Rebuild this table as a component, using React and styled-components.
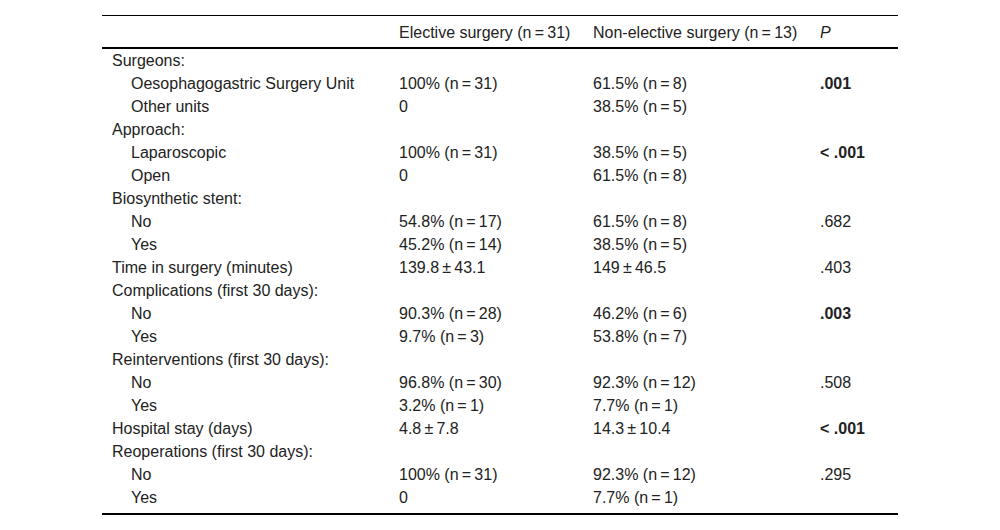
import React from 'react';
import styled, { createGlobalStyle } from 'styled-components';

const GlobalStyle = createGlobalStyle`
    html, body {
        margin: 0;
        padding: 0;
        background: #fff;
    }
    body {
        font-family: "Liberation Sans", Arial, sans-serif;
        color: #222;
    }
`

const Page = styled.div`
    width: 1000px;
    height: 530px;
    padding: 15px 0 0 102px;
    box-sizing: border-box;
`

const Table = styled.table`
    width: 796px;
    border-collapse: collapse;
    table-layout: fixed;
    font-size: 16px;
    line-height: 19px;
    border-top: 1px solid #000;
    border-bottom: 2px solid #000;
`

const HeadCell = styled.th`
    text-align: left;
    font-weight: normal;
    font-style: ${p => (p.$italic ? 'italic' : 'normal')};
    padding: 7px 10px 5px;
    border-bottom: 2px solid #000;
    white-space: nowrap;
`

const Cell = styled.td`
    padding: 2px 10px 2px ${p => (p.$indent ? 29 : 10)}px;
    font-weight: ${p => (p.$bold ? 'bold' : 'normal')};
    white-space: nowrap;
`

const Row = styled.tr`
    &:first-child td {
        padding-top: 2px;
    }
    &:last-child td {
        padding-bottom: 6px;
    }
`

const n = v => `(n\u2009=\u2009${v})`
const pm = (a, b) => `${a}\u2009±\u2009${b}`

const rows = [
    { label: 'Surgeons:' },
    { label: 'Oesophagogastric Surgery Unit', sub: true, a: `100% ${n(31)}`, b: `61.5% ${n(8)}`, p: '.001', bold: true },
    { label: 'Other units', sub: true, a: '0', b: `38.5% ${n(5)}` },
    { label: 'Approach:' },
    { label: 'Laparoscopic', sub: true, a: `100% ${n(31)}`, b: `38.5% ${n(5)}`, p: '< .001', bold: true },
    { label: 'Open', sub: true, a: '0', b: `61.5% ${n(8)}` },
    { label: 'Biosynthetic stent:' },
    { label: 'No', sub: true, a: `54.8% ${n(17)}`, b: `61.5% ${n(8)}`, p: '.682' },
    { label: 'Yes', sub: true, a: `45.2% ${n(14)}`, b: `38.5% ${n(5)}` },
    { label: 'Time in surgery (minutes)', a: pm('139.8', '43.1'), b: pm('149', '46.5'), p: '.403' },
    { label: 'Complications (first 30 days):' },
    { label: 'No', sub: true, a: `90.3% ${n(28)}`, b: `46.2% ${n(6)}`, p: '.003', bold: true },
    { label: 'Yes', sub: true, a: `9.7% ${n(3)}`, b: `53.8% ${n(7)}` },
    { label: 'Reinterventions (first 30 days):' },
    { label: 'No', sub: true, a: `96.8% ${n(30)}`, b: `92.3% ${n(12)}`, p: '.508' },
    { label: 'Yes', sub: true, a: `3.2% ${n(1)}`, b: `7.7% ${n(1)}` },
    { label: 'Hospital stay (days)', a: pm('4.8', '7.8'), b: pm('14.3', '10.4'), p: '< .001', bold: true },
    { label: 'Reoperations (first 30 days):' },
    { label: 'No', sub: true, a: `100% ${n(31)}`, b: `92.3% ${n(12)}`, p: '.295' },
    { label: 'Yes', sub: true, a: '0', b: `7.7% ${n(1)}` },
]

export default function App() {
    return (
        <Page>
            <GlobalStyle />
            <Table>
                <colgroup>
                    <col style={{ width: 287 }} />
                    <col style={{ width: 194 }} />
                    <col style={{ width: 227 }} />
                    <col style={{ width: 88 }} />
                </colgroup>
                <thead>
                    <tr>
                        <HeadCell></HeadCell>
                        <HeadCell>Elective surgery {n(31)}</HeadCell>
                        <HeadCell>Non-elective surgery {n(13)}</HeadCell>
                        <HeadCell $italic>P</HeadCell>
                    </tr>
                </thead>
                <tbody>
                    {rows.map((r, i) => (
                        <Row key={i}>
                            <Cell $indent={r.sub}>{r.label}</Cell>
                            <Cell>{r.a}</Cell>
                            <Cell>{r.b}</Cell>
                            <Cell $bold={r.bold}>{r.p}</Cell>
                        </Row>
                    ))}
                </tbody>
            </Table>
        </Page>
    )
}
